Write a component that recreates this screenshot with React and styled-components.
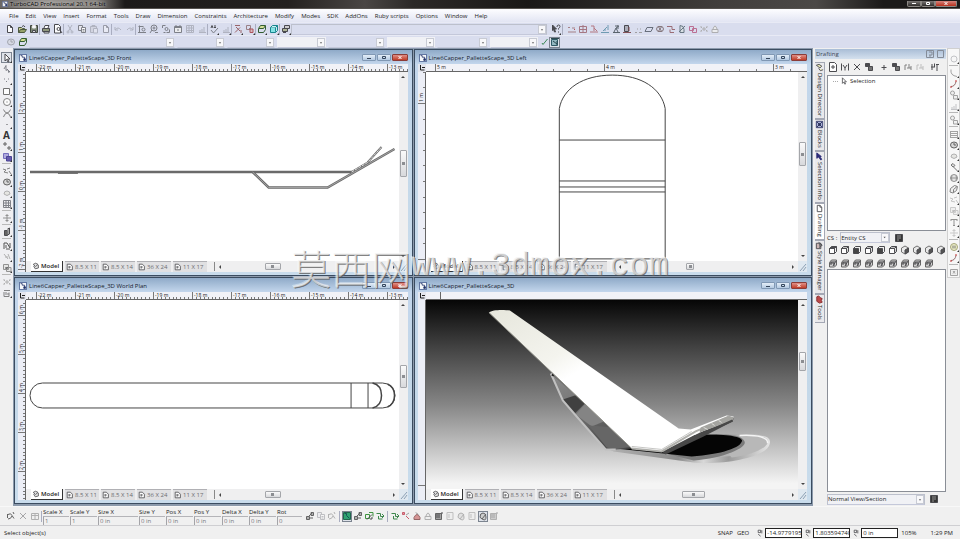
import React from 'react';
import styled, { createGlobalStyle, css } from 'styled-components';

const GlobalStyle = createGlobalStyle`
  * {
    box-sizing: border-box;
  }
  body {
    margin: 0;
    background-color: #f0f0f0;
    color: #1c1c1c;
    font-family: 'Open Sans', 'Noto Sans', 'Noto Sans CJK SC', sans-serif;
    font-size: 6px;
    line-height: 8px;
  }
  button, input, select {
    font: inherit;
    color: inherit;
    margin: 0;
    padding: 0;
    border: none;
    background: none;
    border-radius: 0;
    min-width: 0;
  }
  svg {
    display: block;
  }
`;

const K = '#3a3a3e';
const G = '#74777e';

// every glyph lives on a 10x10 grid: [path, stroke, fill]
const glyphs = {
  page: [['M2.5 1.5h3l2 2v5h-5zM5.5 1.5v2h2', K, '#fff']],
  pageAdd: [['M1.5 .5h5l2 2v7h-7z', K, '#fff'], ['M5 3v4M3 5h4', K]],
  open: [['M1.5 8.5v-5h3l1 1h2v1', '#3d4a2c', '#c3c58a'], ['M1.5 8.5l2-3h6l-2 3z', '#3d4a2c', '#8f9c5c'], ['M5 2.5q2-2 3 .5', K]],
  save: [['M1.5 1.5h7v7h-7z', '#30352c', '#76806c'], ['M3.5 1.5h3v2.500h-3z', '#eee', '#fff'], ['M3.500 6.500h3v2h-3z', K, '#ddd']],
  print: [['M3 4l1-2.500h4l-1 2.500', K, '#fff'], ['M1.500 4.500h7v3h-7z', K, '#889070'], ['M3 7.500h5v1.500h-5z', K, '#eee']],
  preview: [['M1.500 .5h4l2 2v6.500h-6z', K, '#fff'], ['M4 5a1.500 1.500 0 1 0 3 0a1.500 1.500 0 1 0-3 0M7 6l2 3', K]],
  cut: [['M3 1l3.500 6M7 1L3.500 7M2 8a1 1 0 1 0 2 0a1 1 0 1 0-2 0M6 8a1 1 0 1 0 2 0a1 1 0 1 0-2 0', G]],
  copy: [['M1.500 1.500h4v5h-4z', G, '#e8e8ee'], ['M4.500 3.500h4v5h-4z', G, '#fff'], ['M5.500 5.500h2M5.500 7h2', G]],
  paste: [['M1.500 2.500h6v6h-6z', G, '#c8c8cc'], ['M3 1.500h3v1h-3z', G], ['M4.500 4.500h4v4.500h-4z', G, '#eee']],
  del: [['M2 2l6 6M8 2l-6 6', K]],
  undo: [['M2 3v3h3M2 6q3-4 6 0', G]],
  redo: [['M8 3v3h-3M8 6q-3-4-6 0', G]],
  zoomWin: [['M1.500 2.500h5M2.500 1.500v7M1 8.500h8M5 5.500a1.500 1.500 0 1 0 3 0a1.500 1.500 0 1 0-3 0', G]],
  zoomIn: [['M2 4a3 3 0 1 0 6 0a3 3 0 1 0-6 0M3 6l-2 3M5 2.500v3M3.500 4h3M6 8.500h3', G]],
  zoomAll: [['M1.500 4v-2.500h3M5.500 8.500h3v-3M2.500 8.500h2M4 5a1.500 1.500 0 1 0 3 0a1.500 1.500 0 1 0-3 0', G]],
  frame: [['M1.500 2.500h7v6h-7z', G, '#eee'], ['M1.500 3.500h7M3 1v2M7 1v2M5 5v2', G]],
  grid: [['M1.500 1.500h7v7h-7zM1.500 4h7M1.500 6.500h7M4 1.500v7M6.500 1.500v7', G]],
  spell: [['M2 4l1-2.500 1 2.500M5 2h2M5 3.500h2', K], ['M2 6l2.500 3L9 4', G]],
  bars: [['M2 8.500h7M3 8v-2M5 8v-3M7 8v-5', G]],
  lasso: [['M2 1.500h5M3 3l4 4M2 8.500l5-5M8 6v3', '#94585c']],
  pick: [['M1.500 1.500h4v4h-4zM4 4l4 4', '#94787c'], ['M5 5h3v3.500h-3z', '#a8444c', '#d8b8bc']],
  layer: [['M1.500 4.500l2-3h5l-2 3z', '#22501c', '#d4e08c'], ['M1.500 5v3.500h5l2-3v-3.500', '#22501c']],
  cube: [['M1.500 3.500h5v5h-5z', '#007c84', '#7ce4e4'], ['M1.500 3.500l2-2h5l-2 2M8.500 1.500v5l-2 2', '#007c84', '#c4f8f8']],
  stack: [['M3.500 1.500h5v3h-5z', K, '#ccc'], ['M1.500 4.500h5v3h-5z', K, '#aab08c'], ['M2 8.500h3', K]],
  help: [['M1.500 1l4 4h-2l1 3-1 0-1-2.500-1 1z', K, K], ['M6 3q0-2 1.500-2t1.500 1.500q0 1-1.500 2v1M7.500 7.500v1', K]],
  node: [['M1 3.500h2M5 4h3M1 8h8', '#a0787c'], ['M7 5l1 1', '#b04048']],
  redGrid: [['M1.500 2.500h7v6h-7zM5 1v8M1 5.500h8', '#a06c78']],
  axis: [['M2 2h3v5M1 8h8M5 4l3 3', '#b06c76']],
  blueAxis: [['M1 8.500h8M3 7l4-4M5 7V5M8 1v5', '#6494ac']],
  figure: [['M2 8.500h7M3 8l2-4 2 4M4 2h3M5 4l3-2M7 5v-4', '#4c565f']],
  door: [['M2.500 1.500h4v6h-4z', K, '#a8a8b4'], ['M1 8.500h8M7 3v4', '#7c4448']],
  dots: [['M2 8.500h2M6 8.500h3M7 5h1M4 5h1', '#999']],
  skew: [['M1 7.500l2-4h6l-2 4z', '#5c6470']],
  knot: [['M1.500 5a2 1.500 0 1 0 7 0a2 1.500 0 1 0-7 0M3 2l4 6M7 2l-4 6', '#7c6c70']],
  flow: [['M1 2.500h5v3h3M4 5.500v3h4', '#946068']],
  leaf: [['M3 1.500q4 0 4 4v3h-4z', '#5c6c78', '#d8e0e4'], ['M2 8l6-6', '#5c6c78']],
  roses: [['M1.500 2.500h4v4h-4zM4.500 4.500h4v4h-4z', '#b8648a']],
  ring: [['M2 5a3 3 0 1 0 6 0a3 3 0 1 0-6 0', G]],
  cursor: [['M3 1v7l1.500-1.500 1.500 2.500 1-.5-1.500-2.500h2.500z', K, '#fff']],
  nodeEdit: [['M2 5l2-3.500v5l1.500-1M6 6l1 3M5 5l3 3', G]],
  point: [['M2 4h1M6 4h1M4 6l1 1', G]],
  rect: [['M1.500 2.500h6v6h-6z', '#666', '#fff']],
  circle: [['M1.500 5a3.500 3.500 0 1 0 7 0a3.500 3.500 0 1 0-7 0', '#777', '#fff'], ['M4.500 5h1', '#555']],
  curve: [['M1.500 1.500q1 3 3.500 3.500t3.500 4M8.500 1.500q-1 3-3.500 3.500t-3.500 4', '#777']],
  dot: [['M4.500 5.500h1', K]],
  plusDot: [['M3 1v4M1 3h4M6 6h2v2h-2z', '#555']],
  boxes: [['M1.500 1.500h5v5h-5z', '#6a62b8', '#aaa4dc'], ['M4.500 4.500h5v4.500h-5z', '#38308c', '#584ca4']],
  spline: [['M1 3l3 1-2 2 4 1M5 3l3-1M7 5l2 3', '#777']],
  eye: [['M1.500 5a3.500 3 0 1 0 7 0a3.500 3 0 1 0-7 0', '#555', '#d4d4d4'], ['M4 4h2v2', '#555']],
  cloud: [['M2 6q0-3 3-3t3 3q-3 3-6 0', '#aaa', '#e4e4e0']],
  move: [['M5 1v8M1 5h8M3.500 2.500h3M3.500 7.500h3', '#888']],
  blockF: [['M2.500 3.500h3v5h-3z', K, '#555'], ['M5.500 2l2-1v6l-2 1', K, '#999']],
  mesh: [['M2 2v6M2 2h3l3 5V2M4 8h4M4 4v3', '#444']],
  fade: [['M2 2l4 5M3 5h3M6 2l2 5', '#aaa']],
  union: [['M1.500 1.500h5v5h-5zM4.500 4.500h4.500v4h-4.500z', '#888', '#e4e4e4'], ['M3 5l3 0', K]],
  corner: [['M2 2v1.500h1M8 2v1.500h-1M2 8v-1.500h1M8 8v-1.500h-1M4 4h2v2h-2z', '#aaa']],
  build: [['M2 2.500h6M2 4v4.500h5v-4M4 4v3M6 5v2', '#777']],
  arc: [['M2 1.500q-1 6 6 7', '#999']],
  redArc: [['M2 7.500q4 0 5-5', '#8a6060'], ['M1 8h2M6 2h2', '#c02020']],
  pair: [['M1.500 3a2 2 0 1 0 4 0a2 2 0 1 0-4 0M4.500 5.500h4v3.500h-4z', '#999', '#f0f0f0']],
  lines: [['M1 2.500h8M1 4.500h8M1 6.500h8M1 8.500h8M1.500 2v7M8.500 2v7', '#999']],
  sphere: [['M1.500 5a3.500 3.500 0 1 0 7 0a3.500 3.500 0 1 0-7 0M1.500 5h7M3 2.500q-1 2.500 0 5M7 2.500q1 2.500 0 5', '#888', '#e4e4e4']],
  box3d: [['M1.500 4.500l4-3 3 1-1 4-3.500 2.500-3-1z', '#777', '#eee'], ['M4.500 5.500l3.500-3M4.500 5.500v3', '#777']],
  hammer: [['M2 3l2-1.500 2 2-2 1.500zM4.500 5l4 4', '#666', '#ddd']],
  tee: [['M2 2.500h6M2 2v2M8 2v2M5 2.500v6M4 8.500h2', '#888']],
  pause: [['M1.500 5a3.500 3.500 0 1 0 7 0a3.500 3.500 0 1 0-7 0', '#9c9c6c', '#eef0c4'], ['M4 3.500v3M6 3.500v3', '#666']],
  dash: [['M1.500 2.500h7v6h-7z', '#999', '#eee'], ['M4 4l2 2.500M6 4l-2 2.500', '#999']],
  range: [['M1.500 1.500v7M8.500 1.500v7M3 3l2 3 2-3M5 6v2.500', K]],
  blockCopy: [['M1.500 1.500h4v3h-4z', K, K], ['M4.500 4.500h4v4h-4z', K, '#666']],
  plus: [['M5 3v5M2.500 5.500h5', K]],
  trio: [['M2 8V3h2M6 2v4M4 6h4M8 4v4', '#777']],
  settings: [['M2 2v6M4.500 1.500v4M7 2v7M6 2.500h3M1 5h3', K]],
  tabDesign: [['M1.500 2.500l3-1 3 2-2 2zM4 6l2 2.500 3-1', K, '#e8e8b4']],
  tabBlocks: [['M1.500 1.500h7v7h-7z', '#20285c', '#a4acd4'], ['M2 2l6 6M8 2l-6 6M4 4h2v2h-2z', '#141c48']],
  tabSel: [['M2 1v6l2-1.500 2.500 3.500 1-1-2.500-3h2z', '#18186c', '#18186c']],
  tabStyle: [['M1.500 2.500h5v6h-5z', K, '#c8b0b0'], ['M4 1.500l4 3-3 3', K, '#666']],
  tabTools: [['M2 2l2-1 2 2 2 1-1 2 1 2-3 1-3-2z', '#7c1414', '#b83838']],
  face: [['M1.500 3.500h5v5h-5z', K, '#fff'], ['M1.500 3.500l2-2h5l-2 2zM8.500 1.500v5l-2 2', K, '#bbb']],
  faceF: [['M1.500 3.500h5v5h-5z', K, '#333'], ['M1.500 3.500l2-2h5v5l-2 2', K]],
  faceT: [['M1.500 3.500h5v5h-5z', K, '#fff'], ['M1.500 3.500l2-2h5l-2 2z', K, K], ['M8.500 1.500v5l-2 2', K]],
  hex: [['M5 1l3.500 2v4l-3.500 2-3.500-2v-4z', '#666', '#e8e8e8'], ['M5 5v4l3.500-2v-4z', K, '#444']],
  wire: [['M1.500 4.500l2-2.500h5v5l-2 2h-5z', '#555', '#ccc'], ['M3 7v-3h4M5 8l3-5M2 5l4 0v3', K]],
  screen: [['M1.500 1.500h7v7h-7z', K, '#222'], ['M3 3h4M3 5h4M3 7h2', '#888']],
  tick: [['M2 6l1 1.500L7.500 2', '#2c8048']],
  select: [['M2 3.500q3-2 4 1l2 3M2 8q3 0 4-3M1.500 3v4M7 1l1 2', '#555']],
  table: [['M1.500 2.500h7v6h-7zM1.500 4.500h7M5 2.500v6', '#aaa']],
  copyNode: [['M1.500 5.500h3v3h-3zM6 1.500h2.500v3h-2.500zM4 5l3-3M5 7h3', '#555', '#aaa']],
  greenOn: [['M1.500 1.500h7v7h-7z', '#0c5a3c', '#1c9c64'], ['M2.500 2.500h2v2l3 3', '#044']],
  greenBox: [['M1.500 3.500h4v4h-4zM5 1.500h4v4', '#2c8c2c'], ['M3 8.500l5-5M6 8h2v-2', K]],
  greenFlow: [['M1.500 2.500h4v3h3M7 3l2 2-2 2M3.500 5v3h4', '#2c7c3c']],
  redNode: [['M1.500 1.500h2v2h-2zM5 5l3 3', '#c44c5c', '#e08c98'], ['M8 2l-3 2', '#999']],
  redCap: [['M2 8.500h6v-2q-3-6-6 0z', '#8c5858', '#d48c8c'], ['M4 1.500l2 2', '#777']],
  cap: [['M2 8.500h6v-3h-6zM3 5q2-6 4 0', '#aaa', '#eee']],
  hatch: [['M1.500 2.500h6v6h-6z', '#555', '#999'], ['M2 4h4M2 6h4M8 1v2', K]],
  teal: [['M1.500 2.500h6v6h-6z', '#1c4c58', '#8cb4bc'], ['M1 1.500h8M3 4l4 3M7 4v4', '#183840']],
  doc: [['M2 1.500h6v7h-6zM4 3v4', '#bbb', '#eee']],
  magnet: [['M2 6q0-4 3-4t3 4-3 2.500-3-2.500M4 8l4-5', '#555', '#ccc']],
  xyz: [['M1.500 1.500h3v3h-3zM6 1.500v4M1.500 6.500l3 2.500', K]],
  badge: [['M.5.5h9v9h-9z', '#28407c', '#fff'], ['M2 2h2v2h3v3h1', '#14245c'], ['M6 6h2v2h-2z', '#14245c', '#14245c']],
  model: [['M1.500 3q3-3 6 0l-3 2.500zM2 5l2 3.500 4-1v-4', K, '#ddd']],
  sheet: [['M1.500 1.500h4l2.500 2.500v4.500h-6.500z', K, '#fff'], ['M4 4v3M3 5h3', K]],
};

const IconSvg = styled.svg`
  flex: none;
  width: ${(p) => p.$size}px;
  height: ${(p) => p.$size}px;
  opacity: ${(p) => (p.$dim ? 0.4 : 0.9)};
`;

function Icon({ name, size = 10, dim }) {
  return (
    <IconSvg viewBox="0 0 10 10" $size={size} $dim={dim} aria-hidden="true">
      {glyphs[name].map(([d, stroke, fill], i) => (
        <path key={i} d={d} stroke={stroke} fill={fill || 'none'} strokeWidth="1" />
      ))}
    </IconSvg>
  );
}

const Page = styled.div`
  position: relative;
  height: 100vh;
  min-height: 420px;
  display: flex;
  flex-direction: column;
  overflow: hidden;
`;

const TitleBar = styled.header`
  display: flex;
  align-items: center;
  height: 9px;
  padding: 0 3px 1px 2px;
  background: linear-gradient(90deg, #6a6664 0, #9a9692 5%, #86827e 10%, #1d1b1a 13%, #24211f 30%, #4a4644 38%, #2c2927 43%, #1a1817 55%, #413e3c 75%, #4c4947 85%, #1c1a19 92%);
  border-bottom: 1px solid #55524f;
  h1 {
    margin: 0 auto 0 2px;
    font-size: 6px;
    font-weight: 400;
    color: #000;
    text-shadow: 0 0 3px #eee;
  }
`;

const AppButton = styled.button`
  width: ${(p) => (p.$close ? 22 : 14)}px;
  height: 6px;
  border: 1px solid #8c8884;
  border-top: none;
  border-radius: 0 0 2px 2px;
  background: ${(p) => (p.$close ? 'linear-gradient(#d4847c, #b8301c)' : 'linear-gradient(#7c7876, #302d2b)')};
  display: flex;
  justify-content: center;
  align-items: center;
`;

const MenuBar = styled.nav`
  display: flex;
  height: 13px;
  padding: 0 5px;
  align-items: center;
  background: linear-gradient(#fdfdff, #e2e5f3);
  button {
    padding: 0 3px 0 4px;
    white-space: nowrap;
  }
`;

const Toolbar = styled.div`
  display: flex;
  align-items: center;
  height: 13px;
  padding-left: 4px;
  background-color: #d9ddee;
  border-top: 1px solid #e8eaf5;
`;

const ToolGroup = styled.div`
  display: flex;
  align-items: center;
  gap: 1px;
  padding: 0 ${(p) => p.$pad || 0}px;
  border-right: ${(p) => (p.$last ? 'none' : '1px solid #a9adc0')};
`;

const ToolButton = styled.button`
  position: relative;
  flex: none;
  display: flex;
  align-items: center;
  justify-content: center;
  width: ${(p) => p.$width || 11}px;
  height: 11px;
  ${(p) =>
    p.$active &&
    css`
      outline: 1px solid #7c8490;
      outline-offset: -1px;
      background-color: #dfe3ea;
    `}
  ${(p) =>
    p.$more &&
    css`
      &::after {
        content: '';
        position: absolute;
        right: 0;
        bottom: 0;
        border-left: 2px solid transparent;
        border-bottom: 2px solid #333;
      }
    `}
`;

const Combo = styled.div`
  display: flex;
  align-items: center;
  width: ${(p) => p.$width}px;
  height: 11px;
  margin-right: 2px;
  background-color: ${(p) => (p.$light ? '#f0f1f5' : 'transparent')};
  border: 1px solid ${(p) => (p.$framed ? '#bcc0cc' : 'transparent')};
  border-bottom-color: #c4c8da;
  select {
    flex: 1;
    height: 9px;
    appearance: none;
  }
  svg {
    width: 8px;
    height: 9px;
    background-color: #f8f8fa;
    border: 1px solid #c8cbd4;
  }
`;

function DropDown({ label, width, light, framed, value = '' }) {
  return (
    <Combo $width={width} $light={light} $framed={framed}>
      <select aria-label={label} defaultValue={value}>
        <option>{value}</option>
      </select>
      <svg viewBox="0 0 8 9" aria-hidden="true">
        <path d="M2.500 4h3l-1.500 2z" fill="#555" />
      </svg>
    </Combo>
  );
}

const Main = styled.main`
  flex: 1;
  min-height: 0;
  display: flex;
`;

const ToolColumn = styled.aside`
  flex: none;
  display: flex;
  flex-direction: column;
  align-items: center;
  align-self: flex-start;
  width: 13px;
  padding-top: 4px;
  background-color: ${(p) => (p.$right ? '#f7f7f7' : '#efeff2')};
  border: ${(p) => (p.$right ? '1px solid #d0d0d0' : 'none')};
  hr {
    width: 9px;
    height: 1px;
    margin: 1px 0;
    border: none;
    background-color: #b8b8b8;
  }
`;

const Workspace = styled.div`
  flex: 1;
  min-width: 0;
  display: grid;
  grid-template-columns: 1fr 1fr;
  grid-template-rows: 1fr 1fr;
  gap: 1px;
  padding: 1px 1px 2px 1px;
  background-color: #8c9aac;
`;

const WindowFrame = styled.section`
  min-width: 0;
  min-height: 0;
  display: flex;
  flex-direction: column;
  padding: 0 4px 3px 3px;
  border: 1px solid #3b4c60;
  background: linear-gradient(#8faac8, #c3d6ec 14px, #c3d7e8 40%, #c9dcec);
`;

const WindowTitle = styled.header`
  flex: none;
  display: flex;
  align-items: center;
  gap: 1px;
  height: 14px;
  padding: 1px 0 0 1px;
  h2 {
    flex: 1;
    margin: 0 0 0 1px;
    font-size: 6px;
    font-weight: 400;
    color: #16202c;
  }
`;

const CaptionButton = styled.button`
  display: flex;
  align-items: center;
  justify-content: center;
  width: ${(p) => (p.$close ? 16 : 14)}px;
  height: 7px;
  border: 1px solid ${(p) => (p.$close ? '#8c3c38' : '#8098b4')};
  border-radius: 1px;
  background: ${(p) => (p.$close ? 'linear-gradient(#e09088, #c03c28)' : 'linear-gradient(#e4eef8, #b4cae2)')};
`;

const WindowBody = styled.div`
  flex: 1;
  min-height: 0;
  display: grid;
  grid-template-columns: 8px 1fr 9px;
  grid-template-rows: 8px 1fr 11px;
  background-color: #f4f4f6;
`;

const RulerCorner = styled.div`
  background-color: #e4e6ee;
`;

const RulerTop = styled.svg`
  grid-column: 2 / 4;
  width: 100%;
  height: 8px;
  background-color: #f1f2f7;
  border-bottom: 1px solid #666;
  text {
    font-size: 5px;
  }
`;

const RulerSide = styled.svg`
  grid-row: 2 / 4;
  width: 8px;
  height: 100%;
  background-color: #eceef6;
  border-right: 1px solid #666;
  text {
    font-size: 5px;
  }
`;

const Canvas = styled.div`
  min-width: 0;
  min-height: 0;
  overflow: hidden;
  background: ${(p) => (p.$shaded ? 'linear-gradient(#060606, #424242 25%, #858585 55%, #f4f4f4 97%)' : '#fff')};
  svg {
    width: 100%;
    height: 100%;
  }
`;

const Scroll = styled.div`
  display: flex;
  flex-direction: ${(p) => (p.$vertical ? 'column' : 'row')};
  align-items: center;
  flex: 1;
  min-width: 0;
  min-height: 0;
  padding: ${(p) => (p.$vertical ? '3px 0' : '0 3px')};
  background-color: #efeff0;
  svg {
    flex: none;
    width: 4px;
    height: 4px;
  }
`;

const Track = styled.div`
  flex: ${(p) => p.$part} 1 0;
`;

const Thumb = styled.div`
  flex: none;
  width: ${(p) => (p.$vertical ? 7 : p.$length)}px;
  height: ${(p) => (p.$vertical ? p.$length : 7)}px;
  border: 1px solid #a4a6aa;
  border-radius: 1px;
  background: linear-gradient(#fafafa, #d8d9dc);
  display: flex;
  align-items: center;
  justify-content: center;
  &::after {
    content: '';
    width: 3px;
    height: 3px;
    background-color: #8c8e92;
  }
`;

function ScrollBar({ vertical, before, length }) {
  return (
    <Scroll $vertical={vertical} aria-hidden="true">
      <svg viewBox="0 0 4 4">
        <path d={vertical ? 'M0 3h4l-2-2z' : 'M3 0v4l-2-2z'} fill="#444" />
      </svg>
      <Track $part={before} />
      <Thumb $vertical={vertical} $length={length} />
      <Track $part={100 - before} />
      <svg viewBox="0 0 4 4">
        <path d={vertical ? 'M0 1h4l-2 2z' : 'M1 0v4l2-2z'} fill="#444" />
      </svg>
    </Scroll>
  );
}

const SheetBar = styled.div`
  display: flex;
  align-items: stretch;
  min-width: 0;
  padding-left: 5px;
  background-color: #efeff0;
`;

const SheetTabs = styled.div`
  display: flex;
  gap: 2px;
  margin-right: 7px;
`;

const SheetTab = styled.button`
  display: flex;
  align-items: center;
  gap: 1px;
  width: ${(p) => (p.$active ? 32 : 34)}px;
  padding-left: 1px;
  white-space: nowrap;
  ${(p) =>
    p.$active
      ? css`
          background-color: #fff;
          font-weight: 600;
          border-right: 1px solid #333;
          border-bottom: 1px solid #333;
        `
      : css`
          background-color: #e0e0e2;
          color: #6c6c70;
          border-top: 1px solid #b0b0b4;
        `}
`;

const Divider = styled.div`
  width: 1px;
  margin: 1px 0;
  background-color: #888;
`;

const Grip = styled.svg`
  width: 9px;
  height: 11px;
  background-color: #dfe8f0;
`;

const sheets = ['8.5 X 11', '8.5 X 14', '36 X 24', '11 X 17'];

function range(n) {
  return Array.from({ length: n }, (_, i) => i);
}

function TopTicks({ ruler }) {
  const { start, step, labels } = ruler;
  if (!step) {
    return (
      <RulerTop>
        <path d={`M${start + 0.5} 0v7`} stroke="#666" />
      </RulerTop>
    );
  }
  return (
    <RulerTop>
      {range(labels.length * 10 + 3).map((i) => {
        const x = Math.round(start + ((i - 2) * step) / 10) + 0.5;
        const major = (i - 2) % 10 === 0;
        return <path key={i} d={`M${x} ${major ? 0 : 5}V7`} stroke="#777" />;
      })}
      {labels.map((label, i) => (
        <text key={label} x={start + i * step + 2} y="5" fill="#222">
          {label}
        </text>
      ))}
    </RulerTop>
  );
}

function SideTicks({ ruler }) {
  const { start, step, labels } = ruler;
  return (
    <RulerSide>
      {step > 0 &&
        range(labels.length * 10 + 10).map((i) => {
          const y = Math.round(start + ((i - 10) * step) / 10) + 0.5;
          return <path key={i} d={`M5 ${y}h2`} stroke="#777" />;
        })}
      {labels.map((label, i) => {
        const y = start + i * step;
        return (
          <g key={i}>
            <path d={`M0 ${y + 0.5}h7`} stroke="#777" />
            <text transform={`translate(5 ${y - 1}) rotate(-90)`} fill="#222">
              {label}
            </text>
          </g>
        );
      })}
    </RulerSide>
  );
}

function DrawingWindow({ title, top, side, vScroll, hScroll, shaded, children }) {
  return (
    <WindowFrame>
      <WindowTitle>
        <Icon name="badge" size={8} />
        <h2>{title}</h2>
        <CaptionButton aria-label="Minimize">
          <svg width="6" height="5">
            <path d="M1 3.500h4" stroke="#34465c" />
          </svg>
        </CaptionButton>
        <CaptionButton aria-label="Maximize">
          <svg width="6" height="5">
            <path d="M1.500 1.500h3v2h-3z" stroke="#34465c" fill="none" />
          </svg>
        </CaptionButton>
        <CaptionButton $close aria-label="Close">
          <svg width="6" height="5">
            <path d="M1.500 1l3 3M4.500 1l-3 3" stroke="#fff" />
          </svg>
        </CaptionButton>
      </WindowTitle>
      <WindowBody>
        <RulerCorner>
          <svg width="8" height="8">
            <path d="M2.500 1v5h4M4 3.500h3" stroke="#222" fill="none" />
          </svg>
        </RulerCorner>
        <TopTicks ruler={top} />
        <SideTicks ruler={side} />
        <Canvas $shaded={shaded}>{children}</Canvas>
        <ScrollBar vertical before={vScroll[0]} length={vScroll[1]} />
        <SheetBar>
          <SheetTabs>
            <SheetTab $active>
              <Icon name="model" size={8} />
              Model
            </SheetTab>
            {sheets.map((name) => (
              <SheetTab key={name}>
                <Icon name="sheet" size={8} />
                {name}
              </SheetTab>
            ))}
          </SheetTabs>
          <Divider />
          <ScrollBar before={hScroll[0]} length={hScroll[1]} />
        </SheetBar>
        <Grip viewBox="0 0 9 11">
          <path d="M2 10l6-7M5 10l3-4" stroke="#8ca0b4" />
        </Grip>
      </WindowBody>
    </WindowFrame>
  );
}

function FrontDrawing() {
  const beam = 'M4 99.500H327';
  const foot = 'M227 99.500L243 115H302L369 76.500';
  const lip = 'M326 99.500L342 90L356 74.500';
  return (
    <svg viewBox="0 0 373 188" fill="none" preserveAspectRatio="xMinYMid meet">
      <path d="M32 101h20" stroke="#777" />
      {[beam, foot, lip].map((d) => (
        <path key={d} d={d} stroke="#6a6a6a" strokeWidth={d === lip ? 2 : 2.5} />
      ))}
      <path d={foot} stroke="#c8c8c8" strokeWidth="0.6" />
      <path d={lip} stroke="#fff" strokeWidth="0.8" strokeDasharray="3 1" />
    </svg>
  );
}

function LeftDrawing() {
  return (
    <svg viewBox="0 0 373 188" fill="none" stroke="#444" preserveAspectRatio="xMinYMid meet">
      <path d="M133.500 186.500V36C137 16 157 2.500 186.500 2.500S236 16 239.500 36V186.500z" />
      <path d="M133.500 67.500h106M133.500 108.500h106M133.500 114.500h106M133.500 119.500h106" />
    </svg>
  );
}

function PlanDrawing() {
  return (
    <svg viewBox="0 0 373 188" fill="none" stroke="#444" preserveAspectRatio="xMinYMid meet">
      <path d="M16.500 82.500H357A12.500 12.500 0 0 1 357 107.500H16.500A12.500 12.500 0 0 1 16.500 82.500z" />
      <path d="M325.500 82.500v25M342.500 82.500v25" />
      <path d="M347 82.500q9 2 9 12.500t-9 12.500" strokeWidth="1.500" />
      <path d="M362 83.500q7 3 7 11.500t-7 11.500" strokeWidth="1.500" />
    </svg>
  );
}

function ShadedDrawing() {
  return (
    <svg viewBox="0 0 373 188" preserveAspectRatio="xMinYMid meet">
      <defs>
        <linearGradient id="slab" x1="0" y1="0" x2="1" y2="1">
          <stop offset="0" stopColor="#e6e6dc" />
          <stop offset="0.300" stopColor="#f4f4ee" />
          <stop offset="0.400" stopColor="#ffffff" />
        </linearGradient>
        <linearGradient id="strut" x1="0" y1="0" x2="0.500" y2="1">
          <stop offset="0" stopColor="#8c8c8c" />
          <stop offset="0.600" stopColor="#6e6e6e" />
          <stop offset="1" stopColor="#4c4c4c" />
        </linearGradient>
        <linearGradient id="rim" x1="0" y1="0" x2="1" y2="0">
          <stop offset="0" stopColor="#b4b4b4" />
          <stop offset="0.450" stopColor="#8a8a8a" />
          <stop offset="0.600" stopColor="#d8d8d8" />
          <stop offset="0.750" stopColor="#9a9a9a" />
          <stop offset="1" stopColor="#e4e4e4" />
        </linearGradient>
      </defs>
      {/* base plate */}
      <path d="M178 147L188 151L268 162C300 165 341 156 344 144C347 136 336 134 322 134L285 134L210 146z" fill="url(#rim)" />
      <path d="M232 152C282 163 336 154 342 142C344 136 332 135 318 135L280 136z" fill="#b4b4b4" />
      <path d="M312 135C336 134 343 137 342 143C337 150 324 155 306 157L300 150z" fill="#b8b8b8" />
      <path d="M314 135C332 134 343 137 342 143" fill="none" stroke="#f4f4f4" strokeWidth="1.500" />
      <path d="M240 153L268 160C298 158 322 147 319 141C317 136 308 134 296 134L280 136z" fill="#7a7a7a" />
      <path d="M190 148L206 146L240 148L268 134.500C300 133 315 136 316.500 140C316 147 296 154 266 156z" fill="#050505" />
      {/* folded support */}
      <path d="M125 73L137 100L150 115L180 149L188 149L208 148L206 146z" fill="url(#strut)" />
      <path d="M137 99L152 94L160 102L149 113z" fill="#404040" />
      <path d="M160 103L178 121L166 126L150 114z" fill="#848484" />
      <path d="M163 125L192 127L207 146L188 149L181 147z" fill="#666666" />
      <path d="M125 73L137 100L150 115L180 149L190 149" fill="none" stroke="#c0c0c0" strokeWidth="2" />
      <path d="M126 74l2 1" stroke="#222" strokeWidth="2" />
      {/* slab with upturned end */}
      <path d="M236 151L305 117L308 118L307 121L278 136L240 154z" fill="#484848" />
      <path d="M63 12C66 9 78 9 84 10L253 128L265 129L301 115L308 116L307 119L274 132L237 151L206 148z" fill="url(#slab)" />
      <path d="M63 12L206 148" stroke="#8c8c84" strokeWidth="1" />
      <path d="M206 148L236 151L270 131L305 116" fill="none" stroke="#b0b0ac" strokeWidth="2" />
      <path d="M206 146L236 149L266 131" fill="none" stroke="#8c8c88" strokeWidth="0.500" />
      <path d="M275 127L302 115.500L308 116.500L307 120L274 132z" fill="#a4a4a0" />
      <path d="M278 127l4 2M286 123l3 2M293 120l3 2" stroke="#dcdcd8" />
      <path d="M276 134L307 120" stroke="#484848" strokeWidth="2" />
    </svg>
  );
}

const Dock = styled.aside`
  flex: none;
  display: flex;
  flex-direction: column;
  width: 134px;
  padding: 1px 1px 0 2px;
`;

const DockTitle = styled.header`
  display: flex;
  align-items: center;
  justify-content: space-between;
  height: 10px;
  padding: 0 1px;
  background: linear-gradient(#a9bdd6, #d4e0ee);
  color: #3c4654;
`;

const DockBody = styled.div`
  flex: 1;
  min-height: 0;
  display: flex;
  gap: 2px;
`;

const DockTabs = styled.div`
  flex: none;
  width: 10px;
  padding-top: 3px;
`;

const DockTab = styled.button`
  display: flex;
  align-items: center;
  gap: 1px;
  writing-mode: vertical-rl;
  width: 10px;
  padding: 0 0 2px;
  white-space: nowrap;
  border: 1px solid #a4a8b4;
  border-left: none;
  background-color: ${(p) => (p.$active ? '#fff' : '#e9e9ec')};
`;

const DockPanel = styled.div`
  flex: 1;
  min-width: 0;
  display: flex;
  flex-direction: column;
`;

const DockTools = styled.div`
  display: flex;
  align-items: center;
  height: ${(p) => p.$height}px;
  gap: ${(p) => (p.$tight ? 0 : 1)}px;
  flex: none;
  label {
    margin-right: 2px;
  }
  button:nth-of-type(4n + 5) {
    margin-left: ${(p) => (p.$spaced ? 3 : 0)}px;
  }
`;

const Tree = styled.ul`
  flex: ${(p) => p.$part} 1 0;
  margin: 0;
  padding: 1px 0 0 5px;
  list-style: none;
  background-color: #fff;
  border: 1px solid #8a8e96;
  li {
    display: flex;
    align-items: center;
    gap: 2px;
  }
  li::before {
    content: '';
    width: 5px;
    border-top: 1px dotted #aaa;
  }
`;

const PropertyBar = styled.div`
  flex: none;
  display: flex;
  align-items: center;
  height: 20px;
  padding-left: 4px;
  border-top: 1px solid #f8f8f8;
  border-bottom: 1px solid #cfcfd2;
`;

const Field = styled.label`
  display: flex;
  flex-direction: column;
  width: ${(p) => p.$width}px;
  padding-left: 1px;
  input {
    width: 100%;
    height: 9px;
    padding-left: 1px;
    border-left: 1px solid #a4a4a8;
    border-top: 1px solid #b4b4b8;
    color: #77777c;
  }
`;

const StatusBar = styled.footer`
  flex: none;
  display: flex;
  align-items: center;
  height: 13px;
  padding: 0 7px 0 4px;
  span {
    margin-right: 4px;
  }
  span:first-child {
    margin-right: auto;
  }
  span:nth-child(3) {
    margin-right: 8px;
  }
  span:last-child {
    margin: 0 0 0 10px;
  }
`;

const Coordinate = styled.label`
  display: flex;
  align-items: center;
  margin-right: 3px;
  input {
    width: 37px;
    height: 10px;
    padding-left: 1px;
    border: 1px solid #222;
    background-color: #fff;
  }
`;

const Watermark = styled.div`
  position: absolute;
  top: 50%;
  left: 50%;
  transform: translate(-50%, -50%);
  display: flex;
  align-items: center;
  padding-bottom: 6px;
  pointer-events: none;
  white-space: nowrap;
  color: rgba(240, 240, 240, 0.7);
  text-shadow: 1px 1px 0 rgba(90, 90, 90, 0.75), -1px -1px 0 rgba(255, 255, 255, 0.4);
  font-family: 'Liberation Mono', 'Noto Sans CJK SC', monospace;
  font-size: 33px;
  line-height: 44px;
  b {
    font-family: 'Noto Sans CJK SC', sans-serif;
    font-size: 40px;
    font-weight: 300;
  }
`;

const menus = ['File', 'Edit', 'View', 'Insert', 'Format', 'Tools', 'Draw', 'Dimension', 'Constraints', 'Architecture', 'Modify', 'Modes', 'SDK', 'AddOns', 'Ruby scripts', 'Options', 'Window', 'Help'];

// a trailing "-" greys the icon, a "+" gives it a flyout mark, a "*" shows it pressed
const standardTools = [
  ['page', 'open', 'save'],
  ['print', 'preview'],
  ['cut-', 'copy', 'paste-', 'page-'],
  ['undo-', 'redo-'],
  ['zoomWin', 'zoomIn', 'zoomAll', 'frame', 'grid-', 'bars-'],
  ['spell+', 'bars-+'],
  ['lasso+', 'pick+'],
  ['layer+', 'cube+'],
  ['stack+'],
];
const constraintTools = ['node', 'redGrid', 'axis', 'blueAxis', 'figure', 'door', 'dots', 'skew', 'knot', 'flow', 'leaf', 'roses', 'corner', 'cap'];
const drawTools = ['cursor*+', 'nodeEdit', 'point+', 'rect+', 'circle+', 'curve+', 'dot+', 'A', 'plusDot+', 'boxes+', '|', 'spline+', 'eye+', 'cloud+', 'grid+', '|', 'move+', '|', 'blockF+', '|', 'mesh+', 'fade+', 'union+', '|', 'corner', 'build+'];
const modelTools = ['ring-+', '|', 'arc+', 'redArc+', 'pair+', 'bars-+', '|', 'pair+', '|', 'lines+', 'eye+', 'cloud+', 'hammer+', 'sphere+', 'box3d+', 'spline-+', 'union-+', 'tee+', 'move-+', '|', 'pause+', 'redArc+', '|', 'dash'];
const editTools = [
  ['copyNode', 'copy-', 'select-'],
  ['greenOn*', 'copyNode', 'greenBox', 'greenFlow'],
  ['greenFlow', 'redNode', 'redCap', 'cap', 'hatch', 'doc', 'magnet-', 'doc', 'magnet*', 'hatch-'],
];
const fields = [
  ['Scale X', '1', 27],
  ['Scale Y', '1', 28],
  ['Size X', '0 in', 41],
  ['Size Y', '0 in', 27],
  ['Pos X', '0 in', 28],
  ['Pos Y', '0 in', 28],
  ['Delta X', '0 in', 27],
  ['Delta Y', '0 in', 28],
  ['Rot', '0', 26],
];
const dockTabs = [
  ['Design Director', 'tabDesign'],
  ['Blocks', 'tabBlocks'],
  ['Selection Info', 'tabSel'],
  ['Drafting', 'page'],
  ['Style Manager', 'tabStyle'],
  ['Tools', 'tabTools'],
];

const Letter = styled.span`
  font-size: 10px;
  font-weight: 700;
  color: #333;
`;

function Tool({ code, width }) {
  const name = code.replace(/[-+*]/g, '');
  return (
    <ToolButton aria-label={name} $width={width} $more={code.includes('+')} $active={code.includes('*')}>
      {name === 'A' ? <Letter>A</Letter> : <Icon name={name} dim={code.includes('-')} />}
    </ToolButton>
  );
}

function ToolStrip({ tools, right }) {
  return (
    <ToolColumn $right={right}>
      {tools.map((code, i) => (code === '|' ? <hr key={i} /> : <Tool key={i} code={code} />))}
    </ToolColumn>
  );
}

function DraftingDock() {
  return (
    <Dock>
      <DockTitle>
        Drafting
        <svg width="20" height="8">
          <path d="M1.500 .5h7v7h-7zM12.500 .5h6v7h-6zM4 2h3v3h-3M5 5v2" stroke="#848c98" fill="none" />
        </svg>
      </DockTitle>
      <DockBody>
        <DockTabs>
          {dockTabs.map(([name, icon]) => (
            <DockTab key={name} $active={name === 'Drafting'}>
              <Icon name={icon} size={9} />
              {name}
            </DockTab>
          ))}
        </DockTabs>
        <DockPanel>
          <DockTools $height={16} $spaced>
            {['pageAdd', 'range', 'del', 'blockCopy', 'plus', 'blockCopy', 'trio', 'trio-', 'settings'].map((code, i) => (
              <Tool key={i} code={code} />
            ))}
          </DockTools>
          <Tree $part={155}>
            <li>
              <Icon name="cursor" size={8} />
              Selection
            </li>
          </Tree>
          <DockTools $height={13}>
            <label htmlFor="cs">CS :</label>
            <Combo $width={50} $light $framed>
              <select id="cs" defaultValue="Entity CS">
                <option>Entity CS</option>
              </select>
              <svg viewBox="0 0 8 9">
                <path d="M2 3.500h3l-1.500 2z" fill="#555" />
              </svg>
            </Combo>
            <Tool code="screen" />
          </DockTools>
          <DockTools $height={12}>
            {['faceT', 'face', 'faceF', 'face', 'faceF', 'face', 'hex', 'hex', 'hex', 'hex'].map((code, i) => (
              <Tool key={i} code={code} />
            ))}
          </DockTools>
          <DockTools $height={13}>
            {range(9).map((i) => (
              <Tool key={i} code="wire" />
            ))}
          </DockTools>
          <Tree $part={222} as="div" />
          <DockTools $height={14}>
            <DropDown label="View" width={98} light framed value="Normal View/Section" />
            <Tool code="screen" />
          </DockTools>
        </DockPanel>
      </DockBody>
    </Dock>
  );
}

function App() {
  const metres = ['-22 m', '-21 m', '-20 m', '-19 m', '-18 m', '-17 m', '-16 m', '-15 m', '-14 m', '-13 m'];
  return (
    <>
      <GlobalStyle />
      <Page>
        <TitleBar>
          <Icon name="badge" size={6} />
          <h1>TurboCAD Professional 20.1 64-bit</h1>
          <AppButton aria-label="Minimize">
            <svg width="6" height="4">
              <path d="M1 2.500h4" stroke="#fff" />
            </svg>
          </AppButton>
          <AppButton aria-label="Restore">
            <svg width="6" height="5">
              <path d="M1.500 1.500h3v2h-3z" stroke="#fff" fill="none" />
            </svg>
          </AppButton>
          <AppButton $close aria-label="Close">
            <svg width="6" height="5">
              <path d="M1.500 1l3 3M4.500 1l-3 3" stroke="#fff" />
            </svg>
          </AppButton>
        </TitleBar>
        <MenuBar>
          {menus.map((name) => (
            <button key={name}>{name}</button>
          ))}
        </MenuBar>
        <Toolbar>
          {standardTools.map((group, i) => (
            <ToolGroup key={i} $last={i === standardTools.length - 1}>
              {group.map((code, j) => (
                <Tool key={j} code={code} />
              ))}
            </ToolGroup>
          ))}
          <DropDown label="Current view" width={256} framed />
          <ToolGroup $pad={1}>
            <Tool code="help+" />
          </ToolGroup>
          <ToolGroup $pad={4} $last>
            {constraintTools.map((code) => (
              <Tool key={code} code={code} width={10} />
            ))}
          </ToolGroup>
        </Toolbar>
        <Toolbar>
          <ToolGroup $pad={1} $last>
            <Tool code="eye-" />
            <Tool code="layer" />
          </ToolGroup>
          <DropDown label="Layer" width={146} />
          <DropDown label="Color" width={48} />
          <DropDown label="Line style" width={48} />
          <DropDown label="Line width" width={49} light />
          <DropDown label="Brush" width={57} />
          <DropDown label="Pattern" width={48} light />
          <DropDown label="Material" width={51} />
          <DropDown label="Style" width={48} light />
          <Tool code="tick" width={9} />
          <Tool code="teal*" />
        </Toolbar>
        <Main>
          <ToolStrip tools={drawTools} />
          <Workspace>
            <DrawingWindow
              title="Line6Capper_PalletteScape_3D Front"
              top={{ start: 10, step: 39, labels: metres }}
              side={{ start: 41, step: 39, labels: ['2 m', '1 m', '0 m', '-1 m', '-2 m'] }}
              vScroll={[48, 27]}
              hScroll={[28, 16]}
            >
              <FrontDrawing />
            </DrawingWindow>
            <DrawingWindow
              title="Line6Capper_PalletteScape_3D Left"
              top={{ start: 9, step: 169, labels: ['5 m', '4 m', '3 m'] }}
              side={{ start: 31, step: 156, labels: ['1 m', ''] }}
              vScroll={[42, 24]}
              hScroll={[40, 8]}
            >
              <LeftDrawing />
            </DrawingWindow>
            <DrawingWindow
              title="Line6Capper_PalletteScape_3D World Plan"
              top={{ start: 10, step: 39, labels: metres }}
              side={{ start: 15, step: 39, labels: ['6 m', '5 m', '4 m', '3 m', '2 m'] }}
              vScroll={[38, 23]}
              hScroll={[28, 16]}
            >
              <PlanDrawing />
            </DrawingWindow>
            <DrawingWindow
              title="Line6Capper_PalletteScape_3D"
              top={{ start: 14, step: 0, labels: [] }}
              side={{ start: 185, step: 0, labels: [''] }}
              vScroll={[29, 19]}
              hScroll={[41, 23]}
              shaded
            >
              <ShadedDrawing />
            </DrawingWindow>
          </Workspace>
          <DraftingDock />
          <ToolStrip tools={modelTools} right />
        </Main>
        <PropertyBar>
          <ToolGroup $pad={1}>
            <Tool code="select" />
            <Tool code="del-" />
            <Tool code="table" />
          </ToolGroup>
          {fields.map(([name, value, width]) => (
            <Field key={name} $width={width}>
              {name}
              <input defaultValue={value} />
            </Field>
          ))}
          <Divider />
          {editTools.map((group, i) => (
            <ToolGroup key={i} $pad={2} $last={i === 2}>
              {group.map((code, j) => (
                <Tool key={j} code={code} width={10} />
              ))}
            </ToolGroup>
          ))}
        </PropertyBar>
        <StatusBar>
          <span>Select object(s)</span>
          <span>SNAP</span>
          <span>GEO</span>
          {['-14.97791957', '1.8035947403', '0 in'].map((value) => (
            <Coordinate key={value}>
              <Icon name="xyz" size={8} />
              <input aria-label="Coordinate" defaultValue={value} />
            </Coordinate>
          ))}
          <span>105%</span>
          <span>1:29 PM</span>
        </StatusBar>
        <Watermark>
          <b>莫西网</b>www.3dmox.com
        </Watermark>
      </Page>
    </>
  );
}

export default App;
